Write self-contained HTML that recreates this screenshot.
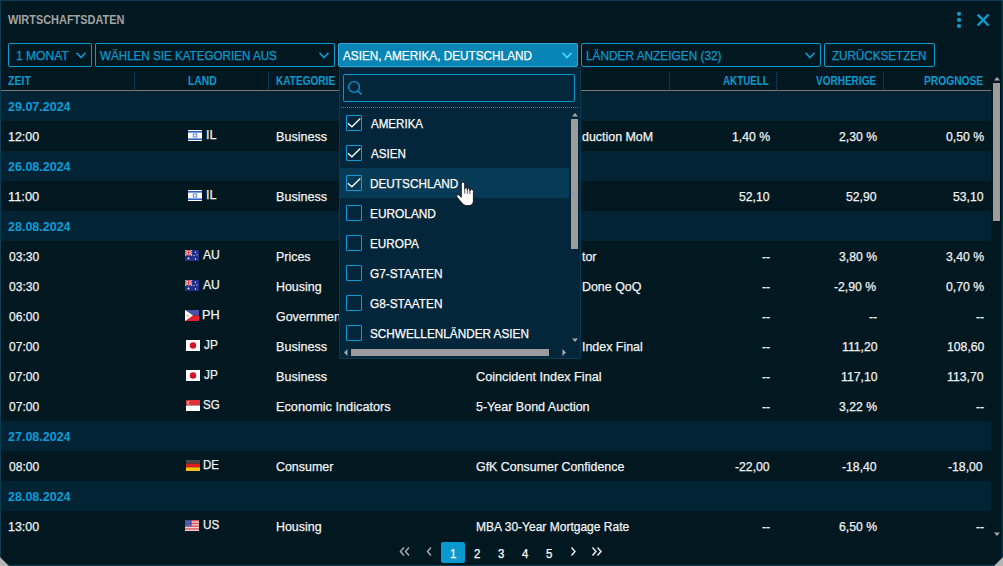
<!DOCTYPE html>
<html><head><meta charset="utf-8"><style>
*{margin:0;padding:0;box-sizing:border-box}
html,body{width:1003px;height:566px;overflow:hidden;background:#021821}
body{position:relative;font-family:"Liberation Sans",sans-serif;font-size:13px}
.win{position:absolute;left:0;top:0;width:1003px;height:566px;border:1px solid #0a3c52;background:#021821}
.t{position:absolute;white-space:pre;line-height:30px;height:30px;transform-origin:0 0}
.t.r{-webkit-text-stroke:0.25px currentColor}
.ab{position:absolute;overflow:visible}
.btn{position:absolute;top:43px;height:24px;border:1px solid #0b9bd0;border-radius:2px}
.btn.act{background:#0985b5;border-color:#2aa8de;z-index:4}
.sep{position:absolute;top:72px;height:18px;width:1px;background:repeating-linear-gradient(to bottom,#0b5576 0 1px,transparent 1px 2px)}
.hline{position:absolute;left:1px;top:90px;width:990px;height:1px;background:#7e7a72}
.dr{position:absolute;left:1px;width:990px;height:30px;background:#022334}
.fl{position:absolute;line-height:0}
.fl svg{display:block}
.panel{position:absolute;left:339px;top:67px;width:242px;height:292px;background:#03263a;border:1px solid #0b3a50;z-index:8}
.srch{position:absolute;left:343px;top:74px;width:232px;height:28px;border:1px solid #0a93cc;border-radius:2px;z-index:9}
.dots{position:absolute;left:341px;top:107px;width:238px;height:1px;background:repeating-linear-gradient(to right,#0a93cc 0 1px,transparent 1px 2px);z-index:9}
.hov{position:absolute;left:340px;width:229px;height:30px;background:#063a55;z-index:9}
.cb{position:absolute;left:346px;width:16px;height:16px;border:1px solid #0e9bd6;border-radius:1px;z-index:10}
.thumb{position:absolute;background:#9c9c9c}
.pg{position:absolute;left:441px;top:542px;width:24px;height:21px;background:#0a98cf;border-radius:2px}
</style></head><body>
<div class="win"></div>
<div class="dr" style="top:91px"></div><div class="dr" style="top:151px"></div><div class="dr" style="top:211px"></div><div class="dr" style="top:421px"></div><div class="dr" style="top:481px"></div>
<div class="hline"></div>
<div class="sep" style="left:134px"></div><div class="sep" style="left:268px"></div><div class="sep" style="left:469px"></div><div class="sep" style="left:669px"></div><div class="sep" style="left:776px"></div><div class="sep" style="left:883px"></div>
<!-- icons -->
<svg class="ab" style="left:954px;top:10px" width="10" height="20" viewBox="0 0 10 20"><circle cx="5" cy="3.8" r="2.1" fill="#0b9bd0"/><circle cx="5" cy="9.9" r="2.1" fill="#0b9bd0"/><circle cx="5" cy="16" r="2.1" fill="#0b9bd0"/></svg>
<svg class="ab" style="left:975px;top:11px" width="17" height="17" viewBox="0 0 17 17"><path d="M2.6 3.6L13.5 14.5M13.5 3.6L2.6 14.5" stroke="#0b9bd0" stroke-width="2.4"/></svg>
<div class="btn" style="left:8px;width:84px"></div><div class="btn" style="left:95px;width:240px"></div><div class="btn act" style="left:338px;width:240px"></div><div class="btn" style="left:581px;width:240px"></div><div class="btn" style="left:824px;width:111px"></div>
<svg class="ab" style="left:75px;top:51px;z-index:6" width="12" height="8" viewBox="-1 -1 12 8"><path d="M0.5 0.8L5.00 5.50L9.50 0.8" fill="none" stroke="#0b9bd0" stroke-width="1.6"/></svg><svg class="ab" style="left:318px;top:51px;z-index:6" width="12" height="8" viewBox="-1 -1 12 8"><path d="M0.5 0.8L5.00 5.50L9.50 0.8" fill="none" stroke="#0b9bd0" stroke-width="1.6"/></svg><svg class="ab" style="left:561px;top:51px;z-index:6" width="12" height="8" viewBox="-1 -1 12 8"><path d="M0.5 0.8L5.00 5.50L9.50 0.8" fill="none" stroke="#40e0ff" stroke-width="1.6"/></svg><svg class="ab" style="left:804px;top:51px;z-index:6" width="12" height="8" viewBox="-1 -1 12 8"><path d="M0.5 0.8L5.00 5.50L9.50 0.8" fill="none" stroke="#0b9bd0" stroke-width="1.6"/></svg>
<div class="fl" style="left:188px;top:130px"><svg width="14" height="11" viewBox="0 0 14 11"><rect width="14" height="11" fill="#fff"/><rect y="1" width="14" height="1.6" fill="#2d5fc4"/><rect y="8.4" width="14" height="1.6" fill="#2d5fc4"/><rect x="5.3" y="4" width="3.4" height="3" fill="none" stroke="#5d86d6" stroke-width="1"/></svg></div><div class="fl" style="left:188px;top:190px"><svg width="14" height="11" viewBox="0 0 14 11"><rect width="14" height="11" fill="#fff"/><rect y="1" width="14" height="1.6" fill="#2d5fc4"/><rect y="8.4" width="14" height="1.6" fill="#2d5fc4"/><rect x="5.3" y="4" width="3.4" height="3" fill="none" stroke="#5d86d6" stroke-width="1"/></svg></div><div class="fl" style="left:185px;top:250px"><svg width="14" height="11" viewBox="0 0 14 11"><rect width="14" height="11" fill="#22308a"/><path d="M0 0L7 5.5M7 0L0 5.5" stroke="#fff" stroke-width="1.2"/><path d="M0 0L7 5.5M7 0L0 5.5" stroke="#d22" stroke-width="0.5"/><path d="M3.5 0V5.5M0 2.75H7" stroke="#fff" stroke-width="1.6"/><path d="M3.5 0V5.5M0 2.75H7" stroke="#d22" stroke-width="0.8"/><circle cx="3.5" cy="8.4" r="0.9" fill="#fff"/><circle cx="10.5" cy="2.2" r="0.6" fill="#fff"/><circle cx="9" cy="5.5" r="0.6" fill="#fff"/><circle cx="12" cy="4.8" r="0.6" fill="#fff"/><circle cx="10.5" cy="9" r="0.7" fill="#fff"/></svg></div><div class="fl" style="left:185px;top:280px"><svg width="14" height="11" viewBox="0 0 14 11"><rect width="14" height="11" fill="#22308a"/><path d="M0 0L7 5.5M7 0L0 5.5" stroke="#fff" stroke-width="1.2"/><path d="M0 0L7 5.5M7 0L0 5.5" stroke="#d22" stroke-width="0.5"/><path d="M3.5 0V5.5M0 2.75H7" stroke="#fff" stroke-width="1.6"/><path d="M3.5 0V5.5M0 2.75H7" stroke="#d22" stroke-width="0.8"/><circle cx="3.5" cy="8.4" r="0.9" fill="#fff"/><circle cx="10.5" cy="2.2" r="0.6" fill="#fff"/><circle cx="9" cy="5.5" r="0.6" fill="#fff"/><circle cx="12" cy="4.8" r="0.6" fill="#fff"/><circle cx="10.5" cy="9" r="0.7" fill="#fff"/></svg></div><div class="fl" style="left:185px;top:310px"><svg width="14" height="11" viewBox="0 0 14 11"><rect width="14" height="5.5" fill="#4a52a6"/><rect y="5.5" width="14" height="5.5" fill="#e02030"/><path d="M0 0L8 5.5L0 11Z" fill="#fff"/><circle cx="2.6" cy="5.5" r="1" fill="#f5c000"/></svg></div><div class="fl" style="left:186px;top:340px"><svg width="14" height="11" viewBox="0 0 14 11"><rect width="14" height="11" fill="#fff"/><circle cx="7" cy="5.5" r="3.2" fill="#d3132a"/></svg></div><div class="fl" style="left:186px;top:370px"><svg width="14" height="11" viewBox="0 0 14 11"><rect width="14" height="11" fill="#fff"/><circle cx="7" cy="5.5" r="3.2" fill="#d3132a"/></svg></div><div class="fl" style="left:186px;top:400px"><svg width="14" height="11" viewBox="0 0 14 11"><rect width="14" height="5.5" fill="#e0303a"/><rect y="5.5" width="14" height="5.5" fill="#fff"/><circle cx="3" cy="2.7" r="1.7" fill="#fff"/><circle cx="3.7" cy="2.7" r="1.5" fill="#e0303a"/></svg></div><div class="fl" style="left:186px;top:460px"><svg width="14" height="11" viewBox="0 0 14 11"><rect width="14" height="3.7" fill="#474747"/><rect y="3.7" width="14" height="3.6" fill="#dd1c1c"/><rect y="7.3" width="14" height="3.7" fill="#f8c300"/></svg></div><div class="fl" style="left:185px;top:520px"><svg width="14" height="11" viewBox="0 0 14 11"><rect width="14" height="11" fill="#fff"/><rect y="0.00" width="14" height="0.79" fill="#c9252f"/><rect y="1.57" width="14" height="0.79" fill="#c9252f"/><rect y="3.14" width="14" height="0.79" fill="#c9252f"/><rect y="4.71" width="14" height="0.79" fill="#c9252f"/><rect y="6.29" width="14" height="0.79" fill="#c9252f"/><rect y="7.86" width="14" height="0.79" fill="#c9252f"/><rect y="9.43" width="14" height="0.79" fill="#c9252f"/><rect width="6.8" height="6.3" fill="#3a4896"/><g fill="#c8cde8"><rect x="0.8" y="0.8" width="0.6" height="0.6"/><rect x="0.8" y="2.4" width="0.6" height="0.6"/><rect x="0.8" y="4.0" width="0.6" height="0.6"/><rect x="0.8" y="5.6" width="0.6" height="0.6"/><rect x="2.5" y="0.8" width="0.6" height="0.6"/><rect x="2.5" y="2.4" width="0.6" height="0.6"/><rect x="2.5" y="4.0" width="0.6" height="0.6"/><rect x="2.5" y="5.6" width="0.6" height="0.6"/><rect x="4.2" y="0.8" width="0.6" height="0.6"/><rect x="4.2" y="2.4" width="0.6" height="0.6"/><rect x="4.2" y="4.0" width="0.6" height="0.6"/><rect x="4.2" y="5.6" width="0.6" height="0.6"/><rect x="5.9" y="0.8" width="0.6" height="0.6"/><rect x="5.9" y="2.4" width="0.6" height="0.6"/><rect x="5.9" y="4.0" width="0.6" height="0.6"/><rect x="5.9" y="5.6" width="0.6" height="0.6"/></g></svg></div>
<div class="panel"></div>
<div class="srch"></div>
<svg class="ab" style="left:346px;top:79px;z-index:10" width="18" height="18" viewBox="0 0 18 18"><circle cx="8" cy="8" r="5.4" fill="none" stroke="#0a93cc" stroke-width="1.4"/><path d="M12 12L15.5 15.5" stroke="#0a93cc" stroke-width="1.6"/></svg>
<div class="dots"></div>
<div class="cb" style="top:115px"><svg width="16" height="16" viewBox="0 0 16 16" style="position:absolute;left:-1px;top:-1px"><path d="M1.9 8.3L5.9 11.8L14.3 3.5" fill="none" stroke="#fff" stroke-width="1.3"/></svg></div><div class="cb" style="top:145px"><svg width="16" height="16" viewBox="0 0 16 16" style="position:absolute;left:-1px;top:-1px"><path d="M1.9 8.3L5.9 11.8L14.3 3.5" fill="none" stroke="#fff" stroke-width="1.3"/></svg></div><div class="hov" style="top:168px"></div><div class="cb" style="top:175px"><svg width="16" height="16" viewBox="0 0 16 16" style="position:absolute;left:-1px;top:-1px"><path d="M1.9 8.3L5.9 11.8L14.3 3.5" fill="none" stroke="#fff" stroke-width="1.3"/></svg></div><div class="cb" style="top:205px"></div><div class="cb" style="top:235px"></div><div class="cb" style="top:265px"></div><div class="cb" style="top:295px"></div><div class="cb" style="top:325px"></div>
<div class="thumb" style="left:571px;top:119px;width:7px;height:130px;z-index:10"></div>
<svg class="ab" style="left:571px;top:112px;z-index:10" width="8" height="5" viewBox="0 0 8 5"><path d="M1 4.5L4 1L7 4.5Z" fill="#a8a8a8"/></svg>
<svg class="ab" style="left:571px;top:338px;z-index:10" width="8" height="5" viewBox="0 0 8 5"><path d="M1 0.5L4 4L7 0.5Z" fill="#a8a8a8"/></svg>
<div class="thumb" style="left:351px;top:349px;width:198px;height:7px;z-index:10"></div>
<svg class="ab" style="left:343px;top:348px;z-index:10" width="6" height="9" viewBox="0 0 6 9"><path d="M4.5 1L1 4.5L4.5 8Z" fill="#a8a8a8"/></svg>
<svg class="ab" style="left:561px;top:348px;z-index:10" width="6" height="9" viewBox="0 0 6 9"><path d="M1.5 1L5 4.5L1.5 8Z" fill="#a8a8a8"/></svg>
<!-- main scrollbar -->
<div class="thumb" style="left:993px;top:83px;width:7px;height:138px"></div>
<svg class="ab" style="left:993px;top:76px" width="8" height="5" viewBox="0 0 8 5"><path d="M1 4.5L4 1L7 4.5Z" fill="#a8a8a8"/></svg>
<svg class="ab" style="left:993px;top:532px" width="8" height="5" viewBox="0 0 8 5"><path d="M1 0.5L4 4L7 0.5Z" fill="#a8a8a8"/></svg>
<!-- resize corners -->
<svg class="ab" style="left:0;top:556px" width="10" height="10" viewBox="0 0 10 10"><path d="M0 1L9 10H0Z" fill="#b4b4b4"/></svg>
<svg class="ab" style="left:993px;top:556px" width="10" height="10" viewBox="0 0 10 10"><path d="M10 1L1 10H10Z" fill="#b4b4b4"/></svg>
<!-- pagination -->
<div class="pg"></div>
<svg class="ab" style="left:399px;top:546px" width="12" height="11" viewBox="0 0 12 11"><path d="M5 1.5L1.5 5.5L5 9.5M10 1.5L6.5 5.5L10 9.5" fill="none" stroke="#a8a8a8" stroke-width="1.5"/></svg>
<svg class="ab" style="left:426px;top:546px" width="7" height="11" viewBox="0 0 7 11"><path d="M5 1.5L1.5 5.5L5 9.5" fill="none" stroke="#a8a8a8" stroke-width="1.5"/></svg>
<svg class="ab" style="left:570px;top:546px" width="7" height="11" viewBox="0 0 7 11"><path d="M1.5 1.5L5 5.5L1.5 9.5" fill="none" stroke="#e8e8e8" stroke-width="1.5"/></svg>
<svg class="ab" style="left:591px;top:546px" width="12" height="11" viewBox="0 0 12 11"><path d="M1.5 1.5L5 5.5L1.5 9.5M6.5 1.5L10 5.5L6.5 9.5" fill="none" stroke="#e8e8e8" stroke-width="1.5"/></svg>
<div class="t" style="left:8.00px;top:5px;font-weight:bold;color:#a3a3a3;transform:scaleX(0.8406);">WIRTSCHAFTSDATEN</div><div class="t r" style="left:16.07px;top:41px;color:#0b9bd0;transform:scaleX(0.9286);">1 MONAT</div><div class="t r" style="left:100.00px;top:41px;color:#0b9bd0;transform:scaleX(0.8944);">WÄHLEN SIE KATEGORIEN AUS</div><div class="t r" style="left:343.00px;top:41px;color:#ffffff;transform:scaleX(0.9053);z-index:5;">ASIEN, AMERIKA, DEUTSCHLAND</div><div class="t r" style="left:585.79px;top:41px;color:#0b9bd0;transform:scaleX(0.9109);">LÄNDER ANZEIGEN (32)</div><div class="t r" style="left:832.30px;top:41px;color:#0b9bd0;transform:scaleX(0.8962);">ZURÜCKSETZEN</div><div class="t" style="left:8.30px;top:66px;font-weight:bold;color:#0c98cd;transform:scaleX(0.8107);">ZEIT</div><div class="t" style="left:187.81px;top:66px;font-weight:bold;color:#0c98cd;transform:scaleX(0.7943);">LAND</div><div class="t" style="left:275.63px;top:66px;font-weight:bold;color:#0c98cd;transform:scaleX(0.7747);">KATEGORIE</div><div class="t" style="left:722.50px;top:66px;font-weight:bold;color:#0c98cd;transform:scaleX(0.7557);">AKTUELL</div><div class="t" style="left:815.70px;top:66px;font-weight:bold;color:#0c98cd;transform:scaleX(0.7705);">VORHERIGE</div><div class="t" style="left:924.21px;top:66px;font-weight:bold;color:#0c98cd;transform:scaleX(0.7878);">PROGNOSE</div><div class="t" style="left:8.20px;top:92px;font-weight:bold;color:#0c9cd6;transform:scaleX(0.9615);">29.07.2024</div><div class="t r" style="left:7.64px;top:122px;color:#f2f2f2;transform:scaleX(0.9581);">12:00</div><div class="t r" style="left:275.63px;top:122px;color:#f2f2f2;transform:scaleX(0.9686);">Business</div><div class="t r" style="left:582.28px;top:122px;color:#f2f2f2;transform:scaleX(0.9550);">duction MoM</div><div class="t r" style="left:731.90px;top:122px;color:#f2f2f2;transform:scaleX(0.9400);">1,40 %</div><div class="t r" style="left:838.90px;top:122px;color:#f2f2f2;transform:scaleX(0.9400);">2,30 %</div><div class="t r" style="left:945.60px;top:122px;color:#f2f2f2;transform:scaleX(0.9400);">0,50 %</div><div class="t" style="left:8.20px;top:152px;font-weight:bold;color:#0c9cd6;transform:scaleX(0.9615);">26.08.2024</div><div class="t r" style="left:7.61px;top:182px;color:#f2f2f2;transform:scaleX(0.9900);">11:00</div><div class="t r" style="left:275.63px;top:182px;color:#f2f2f2;transform:scaleX(0.9686);">Business</div><div class="t r" style="left:739.42px;top:182px;color:#f2f2f2;transform:scaleX(0.9400);">52,10</div><div class="t r" style="left:846.42px;top:182px;color:#f2f2f2;transform:scaleX(0.9400);">52,90</div><div class="t r" style="left:953.12px;top:182px;color:#f2f2f2;transform:scaleX(0.9400);">53,10</div><div class="t" style="left:8.20px;top:212px;font-weight:bold;color:#0c9cd6;transform:scaleX(0.9615);">28.08.2024</div><div class="t r" style="left:8.60px;top:242px;color:#f2f2f2;transform:scaleX(0.9281);">03:30</div><div class="t r" style="left:275.65px;top:242px;color:#f2f2f2;transform:scaleX(0.9550);">Prices</div><div class="t r" style="left:582.07px;top:242px;color:#f2f2f2;transform:scaleX(0.9550);">tor</div><div class="t r" style="left:761.98px;top:242px;color:#f2f2f2;transform:scaleX(0.9400);">--</div><div class="t r" style="left:838.90px;top:242px;color:#f2f2f2;transform:scaleX(0.9400);">3,80 %</div><div class="t r" style="left:945.60px;top:242px;color:#f2f2f2;transform:scaleX(0.9400);">3,40 %</div><div class="t r" style="left:8.60px;top:272px;color:#f2f2f2;transform:scaleX(0.9281);">03:30</div><div class="t r" style="left:275.65px;top:272px;color:#f2f2f2;transform:scaleX(0.9550);">Housing</div><div class="t r" style="left:581.79px;top:272px;color:#f2f2f2;transform:scaleX(0.9550);">Done QoQ</div><div class="t r" style="left:761.98px;top:272px;color:#f2f2f2;transform:scaleX(0.9400);">--</div><div class="t r" style="left:834.20px;top:272px;color:#f2f2f2;transform:scaleX(0.9400);">-2,90 %</div><div class="t r" style="left:945.60px;top:272px;color:#f2f2f2;transform:scaleX(0.9400);">0,70 %</div><div class="t r" style="left:8.60px;top:302px;color:#f2f2f2;transform:scaleX(0.9281);">06:00</div><div class="t r" style="left:275.65px;top:302px;color:#f2f2f2;transform:scaleX(0.9550);">Government</div><div class="t r" style="left:761.98px;top:302px;color:#f2f2f2;transform:scaleX(0.9400);">--</div><div class="t r" style="left:868.98px;top:302px;color:#f2f2f2;transform:scaleX(0.9400);">--</div><div class="t r" style="left:975.68px;top:302px;color:#f2f2f2;transform:scaleX(0.9400);">--</div><div class="t r" style="left:8.60px;top:332px;color:#f2f2f2;transform:scaleX(0.9281);">07:00</div><div class="t r" style="left:275.63px;top:332px;color:#f2f2f2;transform:scaleX(0.9686);">Business</div><div class="t r" style="left:582.04px;top:332px;color:#f2f2f2;transform:scaleX(0.9550);">Index Final</div><div class="t r" style="left:761.98px;top:332px;color:#f2f2f2;transform:scaleX(0.9400);">--</div><div class="t r" style="left:841.72px;top:332px;color:#f2f2f2;transform:scaleX(0.9400);">111,20</div><div class="t r" style="left:946.54px;top:332px;color:#f2f2f2;transform:scaleX(0.9400);">108,60</div><div class="t r" style="left:8.60px;top:362px;color:#f2f2f2;transform:scaleX(0.9281);">07:00</div><div class="t r" style="left:275.63px;top:362px;color:#f2f2f2;transform:scaleX(0.9686);">Business</div><div class="t r" style="left:475.62px;top:362px;color:#f2f2f2;transform:scaleX(0.9764);">Coincident Index Final</div><div class="t r" style="left:761.98px;top:362px;color:#f2f2f2;transform:scaleX(0.9400);">--</div><div class="t r" style="left:840.78px;top:362px;color:#f2f2f2;transform:scaleX(0.9400);">117,10</div><div class="t r" style="left:947.48px;top:362px;color:#f2f2f2;transform:scaleX(0.9400);">113,70</div><div class="t r" style="left:8.60px;top:392px;color:#f2f2f2;transform:scaleX(0.9281);">07:00</div><div class="t r" style="left:275.62px;top:392px;color:#f2f2f2;transform:scaleX(0.9802);">Economic Indicators</div><div class="t r" style="left:475.64px;top:392px;color:#f2f2f2;transform:scaleX(0.9621);">5-Year Bond Auction</div><div class="t r" style="left:761.98px;top:392px;color:#f2f2f2;transform:scaleX(0.9400);">--</div><div class="t r" style="left:838.90px;top:392px;color:#f2f2f2;transform:scaleX(0.9400);">3,22 %</div><div class="t r" style="left:975.68px;top:392px;color:#f2f2f2;transform:scaleX(0.9400);">--</div><div class="t" style="left:8.20px;top:422px;font-weight:bold;color:#0c9cd6;transform:scaleX(0.9615);">27.08.2024</div><div class="t r" style="left:8.60px;top:452px;color:#f2f2f2;transform:scaleX(0.9281);">08:00</div><div class="t r" style="left:275.65px;top:452px;color:#f2f2f2;transform:scaleX(0.9550);">Consumer</div><div class="t r" style="left:475.65px;top:452px;color:#f2f2f2;transform:scaleX(0.9545);">GfK Consumer Confidence</div><div class="t r" style="left:734.72px;top:452px;color:#f2f2f2;transform:scaleX(0.9400);">-22,00</div><div class="t r" style="left:841.72px;top:452px;color:#f2f2f2;transform:scaleX(0.9400);">-18,40</div><div class="t r" style="left:948.42px;top:452px;color:#f2f2f2;transform:scaleX(0.9400);">-18,00</div><div class="t" style="left:8.20px;top:482px;font-weight:bold;color:#0c9cd6;transform:scaleX(0.9615);">28.08.2024</div><div class="t r" style="left:7.64px;top:512px;color:#f2f2f2;transform:scaleX(0.9581);">13:00</div><div class="t r" style="left:275.65px;top:512px;color:#f2f2f2;transform:scaleX(0.9550);">Housing</div><div class="t r" style="left:475.68px;top:512px;color:#f2f2f2;transform:scaleX(0.9244);">MBA 30-Year Mortgage Rate</div><div class="t r" style="left:761.98px;top:512px;color:#f2f2f2;transform:scaleX(0.9400);">--</div><div class="t r" style="left:838.90px;top:512px;color:#f2f2f2;transform:scaleX(0.9400);">6,50 %</div><div class="t r" style="left:975.68px;top:512px;color:#f2f2f2;transform:scaleX(0.9400);">--</div><div class="t r" style="left:370.50px;top:109px;color:#ffffff;transform:scaleX(0.8897);z-index:10;">AMERIKA</div><div class="t r" style="left:370.50px;top:139px;color:#ffffff;transform:scaleX(0.8947);z-index:10;">ASIEN</div><div class="t r" style="left:369.59px;top:169px;color:#ffffff;transform:scaleX(0.9062);z-index:10;">DEUTSCHLAND</div><div class="t r" style="left:369.59px;top:199px;color:#ffffff;transform:scaleX(0.9127);z-index:10;">EUROLAND</div><div class="t r" style="left:369.60px;top:229px;color:#ffffff;transform:scaleX(0.9038);z-index:10;">EUROPA</div><div class="t r" style="left:369.59px;top:259px;color:#ffffff;transform:scaleX(0.9090);z-index:10;">G7-STAATEN</div><div class="t r" style="left:369.59px;top:289px;color:#ffffff;transform:scaleX(0.9090);z-index:10;">G8-STAATEN</div><div class="t r" style="left:369.59px;top:319px;color:#ffffff;transform:scaleX(0.9052);z-index:10;">SCHWELLENLÄNDER ASIEN</div><div class="t r" style="left:449.68px;top:539px;font-size:12px;color:#ffffff;transform:scaleX(0.9500);">1</div><div class="t r" style="left:473.68px;top:539px;font-size:12px;color:#ffffff;transform:scaleX(0.9500);">2</div><div class="t r" style="left:497.68px;top:539px;font-size:12px;color:#ffffff;transform:scaleX(0.9500);">3</div><div class="t r" style="left:521.67px;top:539px;font-size:12px;color:#ffffff;transform:scaleX(0.9500);">4</div><div class="t r" style="left:545.67px;top:539px;font-size:12px;color:#ffffff;transform:scaleX(0.9500);">5</div><div class="t r" style="left:205.82px;top:120px;color:#f2f2f2;transform:scaleX(0.9800)">IL</div><div class="t r" style="left:205.82px;top:180px;color:#f2f2f2;transform:scaleX(0.9800)">IL</div><div class="t r" style="left:202.70px;top:240px;color:#f2f2f2;transform:scaleX(0.9353)">AU</div><div class="t r" style="left:202.70px;top:270px;color:#f2f2f2;transform:scaleX(0.9353)">AU</div><div class="t r" style="left:202.03px;top:300px;color:#f2f2f2;transform:scaleX(0.9750)">PH</div><div class="t r" style="left:204.00px;top:330px;color:#f2f2f2;transform:scaleX(0.9067)">JP</div><div class="t r" style="left:204.00px;top:360px;color:#f2f2f2;transform:scaleX(0.9067)">JP</div><div class="t r" style="left:202.61px;top:390px;color:#f2f2f2;transform:scaleX(0.8882)">SG</div><div class="t r" style="left:203.12px;top:450px;color:#f2f2f2;transform:scaleX(0.8824)">DE</div><div class="t r" style="left:202.60px;top:510px;color:#f2f2f2;transform:scaleX(0.9000)">US</div>
<!-- cursor -->
<svg class="ab" style="left:455px;top:180px;z-index:20" width="22" height="28" viewBox="0 0 22 28"><path d="M6.3 4.2Q6.3 2 8 2Q9.7 2 9.7 4.2L9.7 9.3Q9.9 7.4 11 7.4Q12.3 7.4 12.3 9.3L12.3 10Q12.5 8.3 13.6 8.3Q14.9 8.3 14.9 10.3L14.9 11Q15.1 9.2 16.6 9.2Q18.4 9.2 18.4 11.3L18.4 20.5Q18.4 25.6 13.6 25.6L11.3 25.6Q8.6 25.6 6.6 22.6L1.9 17Q1 15.6 2.3 14.9Q3.5 14.3 4.6 15.5L6.3 17.3Z" fill="#fff" stroke="#111" stroke-width="0.9"/><path d="M9.7 9.3V13.5M12.3 10V13.8M14.9 11V14" stroke="#333" stroke-width="0.8"/></svg>
</body></html>
